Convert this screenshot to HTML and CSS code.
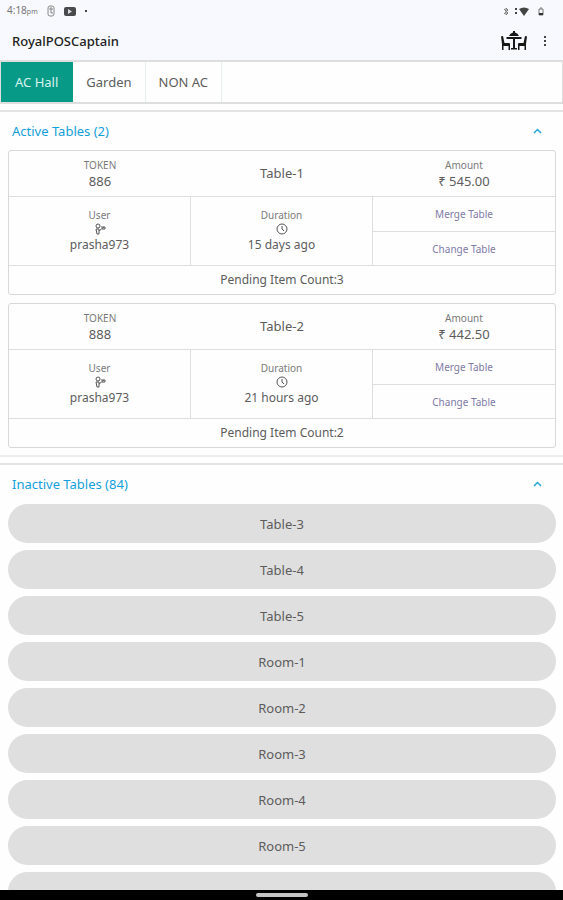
FILE: index.html
```html
<!DOCTYPE html>
<html lang="en">
<head>
    <meta charset="UTF-8">
    <meta name="viewport" content="width=device-width, initial-scale=1.0">
    <title>RoyalPOSCaptain</title>
    <link rel="stylesheet" href="styles.css">
</head>
<body>

    <header>
        <div class="status-bar">
            <span class="time">4:18<small>pm</small></span>
            <svg width="8" height="12" viewBox="0 0 8 12" fill="none" stroke="#888"><rect x="1" y="1" width="6" height="10" rx="2"/><path d="M3 3h2v2H3zM3 7h2v2"/></svg>
            <svg width="12" height="9" viewBox="0 0 12 9"><rect width="12" height="9" rx="2" fill="#484a4e"/><path d="M4 2l4 2.500-4 2.500z" fill="#d9dadd"/></svg>
            <span class="dot"></span>
            <span class="spacer"></span>
            <svg width="7" height="9" viewBox="0 0 7 9" fill="none" stroke="#777"><path d="M1 2l4 4-2 2V1l2 2-4 4"/></svg>
            <svg class="wifi" width="15" height="9" viewBox="0 0 15 9" fill="#444"><path d="M1 1h2v2H1zM1 5h2v2H1zM5 2q5-3 10 0l-5 7z"/></svg>
            <svg width="6" height="9" viewBox="0 0 6 9" fill="none" stroke="#777"><path d="M1 2h4v6H1zM2 1h2"/><path d="M1 7h4" stroke="#333" stroke-width="2"/></svg>
        </div>
        <div class="app-bar">
            <h1>RoyalPOSCaptain</h1>
            <button type="button" class="icon-btn" aria-label="Tables">
                <svg width="26" height="20" viewBox="0 0 26 20" fill="#181818">
                    <path d="M8 5q1-3 4-3.500V0h2v1.500q3 .5 4 3.500z"/>
                    <path d="M5.500 6h15v2h-15z"/>
                    <path d="M12 8h2v9h2v1.500h-6V17h2z"/>
                    <path d="M0 5.500l2-.5 1.500 7H8q1 0 1 1v6H7.500v-4h-5v4H1v-6z"/>
                    <path d="M26 5.500l-2-.5-1.500 7H18q-1 0-1 1v6h1.500v-4h5v4H25v-6z"/>
                </svg>
            </button>
            <button type="button" class="icon-btn" aria-label="More options">
                <svg width="4" height="12" viewBox="0 0 4 12" fill="#444"><path d="M1 1h2v2H1zM1 5h2v2H1zM1 9h2v2H1z"/></svg>
            </button>
        </div>
    </header>

    <nav class="tabs">
        <button type="button" class="active">AC Hall</button>
        <button type="button">Garden</button>
        <button type="button">NON AC</button>
    </nav>

    <main>
        <section>
            <button type="button" class="section-title">
                <span>Active Tables (2)</span>
                <svg width="9" height="6" viewBox="0 0 9 6" fill="none" stroke="#22a5d8" stroke-width="1.5"><path d="M1 5l3.500-3.500L8 5"/></svg>
            </button>

            <article class="card">
                <div class="row top">
                    <div class="cell"><small>TOKEN</small><span>886</span></div>
                    <div class="cell"><span>Table-1</span></div>
                    <div class="cell"><small>Amount</small><span>₹ 545.00</span></div>
                </div>
                <div class="row middle">
                    <div class="cell">
                        <small>User</small>
                        <svg width="12" height="12" viewBox="0 0 12 12" fill="none" stroke="#555"><circle cx="4" cy="3" r="2"/><path d="M2 6h3v5H3zM5 8l5-4M7 4h4v2H8"/></svg>
                        <span>prasha973</span>
                    </div>
                    <div class="cell">
                        <small>Duration</small>
                        <svg width="12" height="12" viewBox="0 0 12 12" fill="none" stroke="#555"><circle cx="6" cy="6" r="5"/><path d="M6 3v3l2 2"/></svg>
                        <span>15 days ago</span>
                    </div>
                    <div class="actions">
                        <button type="button">Merge Table</button>
                        <button type="button">Change Table</button>
                    </div>
                </div>
                <div class="pending">Pending Item Count:3</div>
            </article>

            <article class="card">
                <div class="row top">
                    <div class="cell"><small>TOKEN</small><span>888</span></div>
                    <div class="cell"><span>Table-2</span></div>
                    <div class="cell"><small>Amount</small><span>₹ 442.50</span></div>
                </div>
                <div class="row middle">
                    <div class="cell">
                        <small>User</small>
                        <svg width="12" height="12" viewBox="0 0 12 12" fill="none" stroke="#555"><circle cx="4" cy="3" r="2"/><path d="M2 6h3v5H3zM5 8l5-4M7 4h4v2H8"/></svg>
                        <span>prasha973</span>
                    </div>
                    <div class="cell">
                        <small>Duration</small>
                        <svg width="12" height="12" viewBox="0 0 12 12" fill="none" stroke="#555"><circle cx="6" cy="6" r="5"/><path d="M6 3v3l2 2"/></svg>
                        <span>21 hours ago</span>
                    </div>
                    <div class="actions">
                        <button type="button">Merge Table</button>
                        <button type="button">Change Table</button>
                    </div>
                </div>
                <div class="pending">Pending Item Count:2</div>
            </article>
        </section>

        <section>
            <button type="button" class="section-title">
                <span>Inactive Tables (84)</span>
                <svg width="9" height="6" viewBox="0 0 9 6" fill="none" stroke="#22a5d8" stroke-width="1.5"><path d="M1 5l3.500-3.500L8 5"/></svg>
            </button>
            <div class="table-list">
                <button type="button">Table-3</button>
                <button type="button">Table-4</button>
                <button type="button">Table-5</button>
                <button type="button">Room-1</button>
                <button type="button">Room-2</button>
                <button type="button">Room-3</button>
                <button type="button">Room-4</button>
                <button type="button">Room-5</button>
                <button type="button" aria-label="Next table"></button>
            </div>
        </section>
    </main>

    <footer class="nav-bar"><span></span></footer>

</body>
</html>
```

FILE: styles.css
```css
* {
    box-sizing: border-box;
}
body {
    margin: 0;
    height: 100vh;
    display: flex;
    flex-direction: column;
    overflow: hidden;
    font-family: "Noto Sans", sans-serif;
    font-size: 13px;
    line-height: 16px;
    color: #5c5c5c;
    background-color: #fefefe;
}
button {
    font: inherit;
    color: inherit;
    background: none;
    border: none;
    padding: 0;
    cursor: pointer;
}
header {
    background-color: #f8f9fe;
    border-bottom: 2px solid #dedede;
}
.status-bar {
    display: flex;
    align-items: center;
    height: 22px;
    padding: 0 19px 0 7px;
}
.status-bar svg {
    margin-left: 9px;
}
.status-bar .wifi {
    margin-left: 4px;
}
.time {
    font-size: 10px;
    color: #777;
}
.time small {
    font-size: 7px;
}
.dot {
    width: 2px;
    height: 2px;
    margin-left: 9px;
    background-color: #444;
}
.spacer {
    flex: 1;
}
.app-bar {
    display: flex;
    align-items: center;
    gap: 16px;
    height: 38px;
    padding: 0 16px 0 12px;
}
.app-bar h1 {
    flex: 1;
    margin: 0;
    font-size: 13px;
    font-weight: 500;
    color: #222;
}
.icon-btn {
    display: flex;
}
.tabs {
    display: flex;
    flex-shrink: 0;
    height: 42px;
    border: 1px solid #dedede;
    border-width: 0 1px 2px;
}
.tabs button {
    padding: 0 13px;
    border-right: 1px solid #e6eeee;
}
.tabs .active {
    padding: 0 14px;
    color: #d8f3ee;
    background-color: #079a87;
    border-right-color: #079a87;
}
main {
    flex: 1;
    min-height: 0;
    overflow: hidden;
    padding-top: 6px;
}
section {
    padding: 0 7px 7px 8px;
    margin-bottom: 6px;
    border-top: 2px solid #e3e3e3;
    border-bottom: 2px solid #ededed;
}
.section-title {
    display: flex;
    align-items: center;
    justify-content: space-between;
    width: 100%;
    height: 38px;
    padding: 0 14px 0 4px;
    color: #129fdb;
}
.card {
    border: 1px solid #d8d8d8;
    border-radius: 3px;
    text-align: center;
}
.card + .card {
    margin-top: 8px;
}
.row {
    display: grid;
    grid-template-columns: repeat(3, 1fr);
    border-bottom: 1px solid #dedede;
}
.top {
    height: 46px;
}
.top .cell {
    padding-bottom: 2px;
}
.middle {
    height: 69px;
    font-size: 12px;
}
.cell {
    display: flex;
    flex-direction: column;
    align-items: center;
    justify-content: center;
}
.cell small {
    font-size: 10px;
    color: #7a7a7a;
}
.middle .cell {
    padding-bottom: 3px;
    border-right: 1px solid #dedede;
}
.middle .cell span {
    margin-top: 2px;
}
.actions {
    display: grid;
    grid-template-rows: 1fr 1fr;
}
.actions button {
    font-size: 10px;
    color: #7f7aa6;
}
.actions button + button {
    border-top: 1px solid #dedede;
}
.pending {
    padding: 6px 0;
    font-size: 12px;
}
.table-list {
    display: flex;
    flex-direction: column;
    gap: 7px;
    padding-top: 1px;
}
.table-list button {
    height: 39px;
    border-radius: 20px;
    background-color: #dfdfdf;
}
.nav-bar {
    display: flex;
    align-items: center;
    justify-content: center;
    height: 10px;
    background-color: #000;
}
.nav-bar span {
    width: 52px;
    height: 4px;
    border-radius: 2px;
    background-color: #c4c4c4;
}
```
